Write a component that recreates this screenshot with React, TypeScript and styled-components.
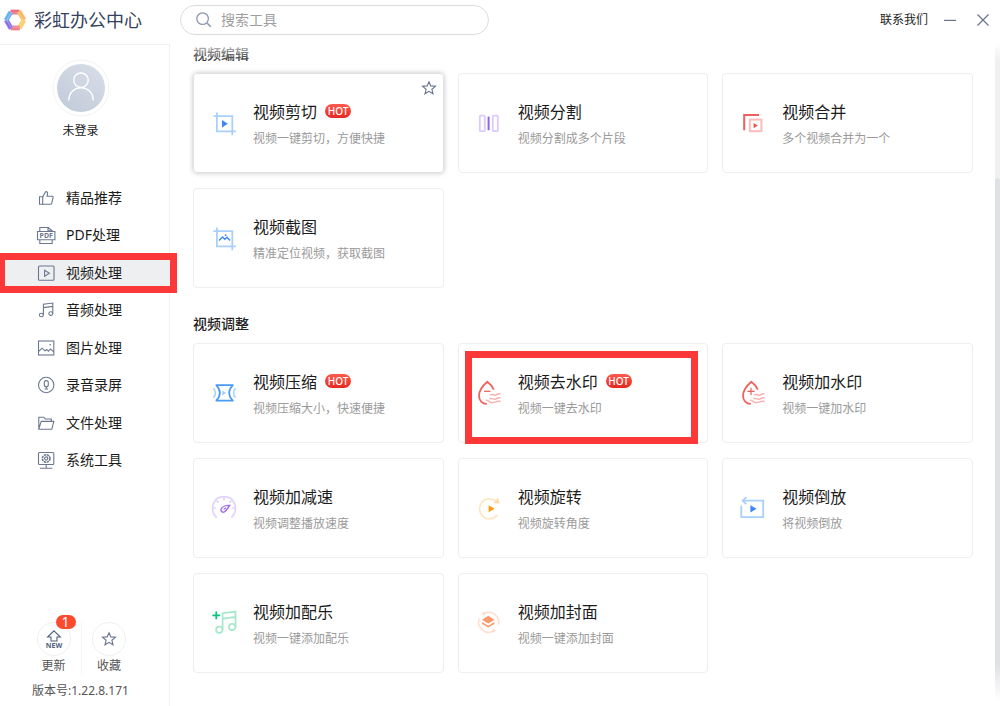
import React from "react";
import styled, { createGlobalStyle, css } from "styled-components";

const GlobalStyle = createGlobalStyle`
  * { box-sizing: border-box; }
  body {
    margin: 0;
    background: #fff;
    color: #1c1c1c;
    font-family: "Noto Sans", "Noto Sans CJK SC", sans-serif;
    font-size: 14px;
  }
  button { font: inherit; color: inherit; background: none; border: 0; padding: 0; cursor: pointer; }
  h1, h2, h3, p, ul { margin: 0; padding: 0; font-weight: 400; list-style: none; }
  svg { display: block; flex: none; }
`;

const Page = styled.div`
  min-height: 100vh;
  display: flex;
  flex-direction: column;
`;

const Header = styled.header`
  height: 44px;
  display: flex;
  align-items: center;
  padding-bottom: 4px;
`;

const Brand = styled.div`
  width: 180px;
  display: flex;
  align-items: center;
  gap: 7px;
  padding-left: 3px;
`;

const BrandName = styled.h1`
  font-size: 18px;
  line-height: 24px;
  color: #34415c;
`;

const SearchBox = styled.label`
  width: 309px;
  height: 30px;
  display: flex;
  align-items: center;
  gap: 8px;
  padding: 0 14px;
  border: 1px solid #d9dbe0;
  border-radius: 15px;
`;

const SearchInput = styled.input`
  flex: 1;
  min-width: 0;
  border: 0;
  outline: 0;
  padding: 0;
  background: none;
  font: inherit;
  line-height: 20px;
  &::placeholder { color: #a0a0a0; opacity: 1; }
`;

const WindowTools = styled.div`
  margin-left: auto;
  display: flex;
  align-items: center;
  padding-right: 10px;
`;

const ContactLink = styled.a`
  font-size: 12px;
  line-height: 18px;
  color: #1c1c1c;
  text-decoration: none;
  margin-right: 15px;
`;

const WindowButton = styled.button`
  & + & { margin-left: 19px; }
`;

const Body = styled.div`
  flex: 1;
  display: flex;
`;

const Sidebar = styled.aside`
  width: 170px;
  flex: none;
  display: flex;
  flex-direction: column;
  border-top: 1px solid #f0f1f3;
  border-right: 1px solid #f0f1f3;
  padding: 14px 0 6px;
`;

const Profile = styled.button`
  align-self: center;
  display: flex;
  flex-direction: column;
  align-items: center;
  gap: 5px;
  margin: 0 0 39px -8px;
  font-size: 12px;
  line-height: 18px;
`;

const Nav = styled.ul`
  display: grid;
  grid-auto-rows: 1fr;
  height: 300px;
`;

const NavItem = styled.li`
  position: relative;
  display: flex;
`;

const NavButton = styled.button<{ $active?: boolean }>`
  width: 100%;
  display: flex;
  align-items: center;
  gap: 10px;
  padding-left: 36px;
  line-height: 20px;
  background: ${(p) => (p.$active ? "#eeeff1" : "transparent")};
`;

const NavMarker = styled.span`
  position: absolute;
  inset: -1px -8px -1px 0;
  z-index: 2;
  border: 7px solid #fd3838;
  border-left-width: 5px;
  pointer-events: none;
`;

const Shortcuts = styled.div`
  margin-top: auto;
  display: flex;
  padding-left: 26px;
`;

const Shortcut = styled.button`
  width: 55px;
  display: flex;
  flex-direction: column;
  align-items: center;
  gap: 1px;
  font-size: 12px;
  line-height: 18px;
  color: #555;
  & + & { border-left: 1px solid #f7f7f8; }
`;

const RoundIcon = styled.span`
  position: relative;
  width: 34px;
  height: 34px;
  display: grid;
  place-items: center;
  border: 1px solid #eeeff1;
  border-radius: 50%;
`;

const CountBadge = styled.span`
  position: absolute;
  top: -8px;
  right: -6px;
  width: 20px;
  height: 14px;
  border-radius: 7px;
  background: #fb4a2d;
  color: #fff;
  font-size: 14px;
  line-height: 14px;
  text-align: center;
`;

const Version = styled.p`
  margin-top: 7px;
  padding-left: 32px;
  font-size: 12px;
  line-height: 18px;
  color: #555;
`;

const Main = styled.main`
  position: relative;
  flex: 1;
  min-width: 0;
  padding: 0 22px 32px 23px;
  &::before {
    content: "";
    position: absolute;
    inset: 0 0 auto;
    height: 18px;
    background: linear-gradient(rgba(255, 255, 255, 0.8), rgba(255, 255, 255, 0));
  }
`;

const Section = styled.section`
  & + & { margin-top: 26px; }
`;

const SectionTitle = styled.h2`
  font-size: 14px;
  font-weight: 500;
  line-height: 20px;
  color: #222;
  margin-bottom: 9px;
`;

const CardGrid = styled.div`
  display: grid;
  grid-template-columns: repeat(3, minmax(0, 1fr));
  gap: 15px 14px;
`;

const Card = styled.article<{ $raised?: boolean }>`
  position: relative;
  height: 100px;
  display: flex;
  align-items: center;
  gap: 15px;
  padding: 0 16px;
  border: 1px solid #eeeeee;
  border-radius: 4px;
  ${(p) =>
    p.$raised &&
    css`
      border-color: #e2e2e2;
      box-shadow: 0 0 5px rgba(0, 0, 0, 0.24);
    `}
`;

const CardText = styled.div`
  display: flex;
  flex-direction: column;
  gap: 6px;
  padding-top: 3px;
`;

const CardTitle = styled.h3`
  display: flex;
  align-items: center;
  gap: 8px;
  font-size: 16px;
  line-height: 22px;
`;

const CardNote = styled.p`
  font-size: 12px;
  line-height: 20px;
  color: #9a9a9a;
`;

const HotBadge = styled.span`
  width: 26px;
  height: 14px;
  margin-bottom: 2px;
  border-radius: 7px;
  background: linear-gradient(#ff5a4e, #e3281f);
  color: #fff;
  font-size: 10px;
  font-weight: 500;
  line-height: 14px;
  text-align: center;
`;

const FavoriteButton = styled.button`
  position: absolute;
  top: 6px;
  right: 6px;
`;

const CardMarker = styled.span`
  position: absolute;
  inset: 7px 9px -2px 6px;
  border: 7px solid #fd3838;
  pointer-events: none;
`;

const ScrollTrack = styled.div`
  width: 5px;
  flex: none;
  display: flex;
  flex-direction: column;
  padding-top: 134px;
  background: linear-gradient(#fff, #f0f0f1 16px, #f0f0f1 calc(100% - 42px), #fff calc(100% - 6px));
`;

const ScrollThumb = styled.div`
  flex: 1;
  border-radius: 3px;
  background: linear-gradient(#e0e1e5 calc(100% - 42px), #fff calc(100% - 6px));
`;

const LogoIcon = () => (
  <svg width="24" height="24" viewBox="0 0 24 24" fill="none" strokeWidth="4.8">
    <path d="M7.5 4h9" stroke="#ef6a7c" />
    <path d="M16 3.2l5 8.8" stroke="#f8b765" />
    <path d="M21 12l-4.6 8" stroke="#fbcf6c" />
    <path d="M16.8 20H7.6" stroke="#f27f86" />
    <path d="M8 20.6L3.2 12" stroke="#8a6fe6" />
    <path d="M3 12.4L7.8 4" stroke="#67b1ee" />
    <path d="M6.5 1.6h11L23.4 12l-5.9 10.4h-11L.6 12z" stroke="#fff" strokeOpacity=".35" strokeWidth="1" strokeDasharray="1 1" />
    <path d="M8 4.7h8l4.200 7.300-4.200 7.300H8L3.800 12z" stroke="#fff" strokeOpacity=".3" strokeWidth="1" />
  </svg>
);

const SearchIcon = () => (
  <svg width="18" height="18" viewBox="0 0 18 18" fill="none" stroke="#8d97ad" strokeWidth="1.3">
    <circle cx="7.6" cy="7.6" r="5.8" />
    <path d="M12 12l3.8 3.8" strokeWidth="1.6" />
  </svg>
);

const AvatarIcon = () => (
  <svg width="58" height="58" viewBox="0 0 58 58" fill="none">
    <defs>
      <linearGradient id="avatar" x1="1" y1="0" x2="0.3" y2="1">
        <stop offset="0" stopColor="#d9dfe9" />
        <stop offset="1" stopColor="#c3ccda" />
      </linearGradient>
    </defs>
    <circle cx="29" cy="29" r="28" stroke="#f2f3f6" />
    <circle cx="29" cy="29" r="24" fill="url(#avatar)" />
    <circle cx="29" cy="21.2" r="7.2" stroke="#fff" strokeWidth="1.4" />
    <path d="M16.8 41.5c0-7.4 5.4-12.8 12.2-12.8s12.2 5.4 12.2 12.8" stroke="#fff" strokeWidth="1.4" />
  </svg>
);

const StarIcon = () => (
  <svg width="16" height="16" viewBox="0 0 16 16" fill="none" stroke="#67728c" strokeWidth="1.1">
    <path d="M8 1.8l1.8 4.1 4.6.4-3.5 3 1.1 4.5L8 11.4l-4 2.4 1.1-4.5-3.5-3 4.6-.4z" />
  </svg>
);

const UpdateIcon = () => (
  <svg width="20" height="20" viewBox="0 0 20 20" fill="none" stroke="#4f5f80" strokeWidth="1.1">
    <path d="M10 1.8L16.4 8H13v4H7V8H3.6z" />
    <text x="10" y="19" textAnchor="middle" fontSize="7" fontWeight="700" fill="#4f5f80" stroke="none">NEW</text>
  </svg>
);

const NavSvg = ({ children }: { children: React.ReactNode }) => (
  <svg width="20" height="20" viewBox="0 0 20 20" fill="none" stroke="#6b7791" strokeWidth="1.1">
    {children}
  </svg>
);

const ToolSvg = ({ children }: { children: React.ReactNode }) => (
  <svg width="28" height="28" viewBox="0 0 28 28" fill="none" strokeWidth="1.8">
    {children}
  </svg>
);

const DropMarks = () => (
  <>
    <path d="M18.8 10.6C17.2 7.4 14.8 4.6 12.3 2.8 8.600 6 4 11.400 4 16.800c0 4.600 3.200 8 7.800 8.100" stroke="#f0625e" />
    <path
      d="M15 16c2.200-1.800 3.600.6 5.400.2 1.800-.4 2.600-2 5.200-1.400M14.400 20c2.200-1.600 4 .6 5.800.2 1.800-.4 2.800-2 5.400-1.400M11 21.400c2.400-.6 3.400 2.600 6.600 2.200 3-.4 4.400-2 8-1.200"
      stroke="#f8b4b1"
      strokeWidth="1.5"
    />
  </>
);

const navItems = [
  {
    label: "精品推荐",
    icon: (
      <>
        <path d="M3.5 8.8h3.2v7.4H3.5z" />
        <path d="M6.7 9l2.9-5.3c1.5-.2 2.2.8 1.9 2.1L11 8.2h4.8c1 0 1.5.7 1.3 1.500l-1.300 5.400c-.2.7-.7 1.100-1.400 1.100H6.700" />
      </>
    ),
  },
  {
    label: "PDF处理",
    icon: (
      <>
        <path d="M3.8 6.500V2.500h8.400l4 3.200v.8M12 2.500v3.300h4M3.800 14.800v3.700h12.400v-3.700M1.500 6.500h17.400v8.300H1.500z" />
        <text x="10.200" y="13.2" textAnchor="middle" fontSize="7" fontWeight="700" fill="#6b7791" stroke="none">PDF</text>
      </>
    ),
  },
  {
    label: "视频处理",
    active: true,
    icon: (
      <>
        <rect x="2.5" y="3" width="15.5" height="14.2" rx="1" />
        <path d="M8.600 7.200v6l4.800-3z" />
      </>
    ),
  },
  {
    label: "音频处理",
    icon: (
      <>
        <ellipse cx="5.400" cy="15" rx="2" ry="1.800" />
        <ellipse cx="14.800" cy="13.600" rx="2" ry="1.800" />
        <path d="M7.400 15V4.200l9.400-1.200v10.600M7.400 7.600l9.400-1.200" />
      </>
    ),
  },
  {
    label: "图片处理",
    icon: (
      <>
        <rect x="2.5" y="3" width="15.300" height="14" />
        <path d="M2.500 13.600l3.600-3.400 2.900 2.600 1.600-1.400 1.900 1.800 2-2.200 3.300 2.800" />
        <circle cx="14.200" cy="6.800" r=".8" fill="#6b7791" stroke="none" />
      </>
    ),
  },
  {
    label: "录音录屏",
    icon: (
      <>
        <circle cx="10.2" cy="10" r="7.700" />
        <rect x="8.300" y="5.600" width="4" height="6.200" rx="2" />
        <path d="M10.300 11.800v2.200M8.600 14h3.400" />
      </>
    ),
  },
  {
    label: "文件处理",
    icon: (
      <path d="M2.800 16.200V4.200h5l1.400 1.800h6.200v2.400M2.800 16.200L5.200 8.400h12.600l-2 7.800z" />
    ),
  },
  {
    label: "系统工具",
    icon: (
      <>
        <rect x="2.500" y="2.500" width="15.300" height="12" rx="1" />
        <circle cx="10.200" cy="8.500" r="3.800" strokeWidth="1.600" strokeDasharray="2.400 .6" />
        <circle cx="10.200" cy="8.500" r="1.600" />
        <path d="M10.200 14.500v3.600M4 18.300h12.400" />
      </>
    ),
  },
];

interface Tool {
  title: string;
  note: string;
  hot?: boolean;
  raised?: boolean;
  marked?: boolean;
  icon: React.ReactNode;
}

const cropFrame = (
  <path d="M6.900 3.500v18.900h19M3.500 7.200h18.800v19" stroke="#a9d0fb" />
);

const editTools: Tool[] = [
  {
    title: "视频剪切",
    note: "视频一键剪切，方便快捷",
    hot: true,
    raised: true,
    icon: (
      <>
        {cropFrame}
        <path d="M12 11v7.600l5.800-3.800z" fill="#3d86f5" />
      </>
    ),
  },
  {
    title: "视频分割",
    note: "视频分割成多个片段",
    icon: (
      <>
        <rect x="4.800" y="6.600" width="5" height="15.600" rx=".6" stroke="#dccbfb" />
        <rect x="17.800" y="6.600" width="5" height="15.600" rx=".6" stroke="#dccbfb" />
        <path d="M13.600 7.600v13.600" stroke="#8f62ea" strokeWidth="2" />
      </>
    ),
  },
  {
    title: "视频合并",
    note: "多个视频合并为一个",
    icon: (
      <>
        <path d="M5.200 21.300V6H20" stroke="#ee5f5f" strokeWidth="2" />
        <rect x="10.800" y="10.600" width="11.600" height="11.600" stroke="#fbbcbc" strokeWidth="2" />
        <path d="M14.600 14v5.200l4.200-2.600z" fill="#ee5050" />
      </>
    ),
  },
  {
    title: "视频截图",
    note: "精准定位视频，获取截图",
    icon: (
      <>
        {cropFrame}
        <path d="M9 16.400l3.600-3.400 2.200 2.200 2.200-2 3 3.200" stroke="#3d86f5" strokeWidth="1.400" />
        <circle cx="15.600" cy="11.200" r=".9" fill="#3d86f5" />
      </>
    ),
  },
];

const adjustTools: Tool[] = [
  {
    title: "视频压缩",
    note: "视频压缩大小，快速便捷",
    hot: true,
    icon: (
      <>
        <path d="M5.600 6.200h18M5.600 21.600h18M6.200 6.200c4.800 4.600 4.800 10.800 0 15.400M23 6.200c-5 4.600-5 10.800 0 15.400" stroke="#4a9bf3" />
        <path d="M3.400 9.200c2.600 3 2.600 6.600 0 9.600M25.600 9.200c-2.600 3-2.600 6.600 0 9.600" stroke="#a9d0fb" strokeWidth="1.500" />
        <path d="M12.200 11.600v4.800l4-2.400z" fill="#a9d0fb" />
      </>
    ),
  },
  {
    title: "视频去水印",
    note: "视频一键去水印",
    hot: true,
    marked: true,
    icon: (
      <>
        <DropMarks />
        <path d="M9 12.300h6.400" stroke="#ee5a56" strokeWidth="1.200" />
      </>
    ),
  },
  {
    title: "视频加水印",
    note: "视频一键加水印",
    icon: (
      <>
        <DropMarks />
        <path d="M8.400 12.300h7.200M12 8.700v7.200" stroke="#ee5a56" strokeWidth="1.200" />
      </>
    ),
  },
  {
    title: "视频加减速",
    note: "视频调整播放速度",
    icon: (
      <>
        <path d="M4.400 20.800l2.200 2.800C-1 16 2.600 2.600 14 2.600s15 13.400 7.400 21l2.200-2.800" stroke="#e2d3fa" strokeWidth="1.700" />
        <path d="M14 2.800v3.400M6.600 6.600l2 2.200M21.400 6.600l-2 2.200M2.600 14h3.200M25.400 14h-3.200" stroke="#e2d3fa" strokeWidth="1.700" />
        <path d="M19.600 11.400c-4-.2-7.800 1.400-8.600 4-.5 2 1.600 3.400 3.400 2.400 2-1 3.400-3.600 5.200-6.400z" stroke="#a06ee8" strokeWidth="1.500" />
        <path d="M13.600 15.600l2.400-1.800" stroke="#a06ee8" strokeWidth="1.200" />
      </>
    ),
  },
  {
    title: "视频旋转",
    note: "视频旋转角度",
    icon: (
      <>
        <path d="M20.700 6.900a10 10 0 1 0 1.800 14" stroke="#ffe7c4" />
        <path d="M23 3.400l1.600 6.200-6-.4z" fill="#ffdca8" />
        <path d="M13.600 11.200v7l6-3.500z" fill="#ff9a0c" />
      </>
    ),
  },
  {
    title: "视频倒放",
    note: "将视频倒放",
    icon: (
      <>
        <path d="M3.600 6.700h20.600v16.500H2.300V11.400M7.400 3.200L3.600 6.700l3.800 3.500" stroke="#a9d0fb" />
        <path d="M11.400 11.200v7.200l6.200-3.600z" fill="#3d86f5" />
      </>
    ),
  },
  {
    title: "视频加配乐",
    note: "视频一键添加配乐",
    icon: (
      <>
        <circle cx="9.300" cy="20.800" r="3.200" stroke="#a9e8cf" />
        <circle cx="22.200" cy="18" r="3.200" stroke="#a9e8cf" />
        <path d="M12.600 20.800V4.200l12.900-1.600V18M12.600 9.600L25.500 8" stroke="#a9e8cf" />
        <path d="M2.400 6.300h7.800M6.300 2.400v7.800" stroke="#0cc480" />
      </>
    ),
  },
  {
    title: "视频加封面",
    note: "视频一键添加封面",
    icon: (
      <>
        <path d="M8.800 4.600a10 10 0 0 1 14.700 11M19 21.600A10 10 0 0 1 4.400 9.400" stroke="#fde0d0" strokeWidth="1.600" />
        <circle cx="8.800" cy="4.800" r="1.700" fill="#fddccb" />
        <circle cx="18.800" cy="21.800" r="1.700" fill="#fddccb" />
        <path d="M13.300 6.800l6.300 3.900-6.300 3.900L7 10.700z" fill="#ff9868" />
        <path d="M7.200 14l6.100 3.600 6.100-3.600" stroke="#ff9868" strokeWidth="1.500" />
      </>
    ),
  },
];

const ToolCard = ({ tool }: { tool: Tool }) => (
  <Card $raised={tool.raised}>
    <ToolSvg>{tool.icon}</ToolSvg>
    <CardText>
      <CardTitle>
        {tool.title}
        {tool.hot && <HotBadge>HOT</HotBadge>}
      </CardTitle>
      <CardNote>{tool.note}</CardNote>
    </CardText>
    {tool.raised && (
      <FavoriteButton aria-label="收藏">
        <StarIcon />
      </FavoriteButton>
    )}
    {tool.marked && <CardMarker />}
  </Card>
);

const ToolSection = ({ title, tools }: { title: string; tools: Tool[] }) => (
  <Section>
    <SectionTitle>{title}</SectionTitle>
    <CardGrid>
      {tools.map((tool) => (
        <ToolCard key={tool.title} tool={tool} />
      ))}
    </CardGrid>
  </Section>
);

export default function App() {
  return (
    <Page lang="zh-CN">
      <GlobalStyle />
      <Header>
        <Brand>
          <LogoIcon />
          <BrandName>彩虹办公中心</BrandName>
        </Brand>
        <SearchBox>
          <SearchIcon />
          <SearchInput type="text" placeholder="搜索工具" aria-label="搜索工具" />
        </SearchBox>
        <WindowTools>
          <ContactLink href="#contact">联系我们</ContactLink>
          <WindowButton aria-label="最小化">
            <svg width="14" height="14" viewBox="0 0 14 14" stroke="#67728c" strokeWidth="1.2">
              <path d="M1 7.400h12" />
            </svg>
          </WindowButton>
          <WindowButton aria-label="关闭">
            <svg width="14" height="14" viewBox="0 0 14 14" stroke="#67728c" strokeWidth="1.2">
              <path d="M1.500 1.500l11 11M12.500 1.500l-11 11" />
            </svg>
          </WindowButton>
        </WindowTools>
      </Header>
      <Body>
        <Sidebar>
          <Profile>
            <AvatarIcon />
            未登录
          </Profile>
          <nav>
            <Nav>
              {navItems.map((item) => (
                <NavItem key={item.label}>
                  <NavButton $active={item.active}>
                    <NavSvg>{item.icon}</NavSvg>
                    {item.label}
                  </NavButton>
                  {item.active && <NavMarker />}
                </NavItem>
              ))}
            </Nav>
          </nav>
          <Shortcuts>
            <Shortcut>
              <RoundIcon>
                <UpdateIcon />
                <CountBadge>1</CountBadge>
              </RoundIcon>
              更新
            </Shortcut>
            <Shortcut>
              <RoundIcon>
                <StarIcon />
              </RoundIcon>
              收藏
            </Shortcut>
          </Shortcuts>
          <Version>版本号:1.22.8.171</Version>
        </Sidebar>
        <Main>
          <ToolSection title="视频编辑" tools={editTools} />
          <ToolSection title="视频调整" tools={adjustTools} />
        </Main>
        <ScrollTrack>
          <ScrollThumb />
        </ScrollTrack>
      </Body>
    </Page>
  );
}
